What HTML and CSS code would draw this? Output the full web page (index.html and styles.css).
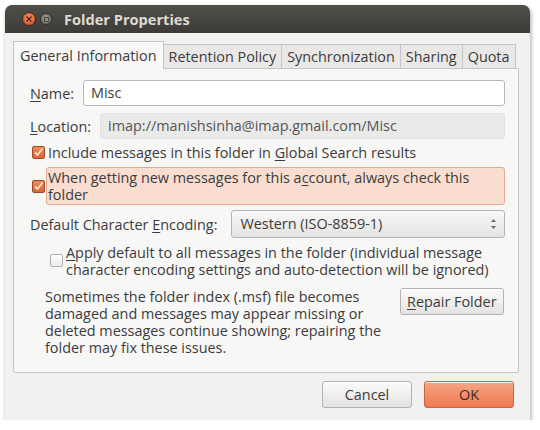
FILE: index.html
```html
<!DOCTYPE html>
<html>
<head>
<meta charset="utf-8">
<link rel="stylesheet" href="styles.css">
</head>
<body>
<div class="window">
  <div class="titlebar">
    <span class="wbtn close"><svg width="8" height="8" viewBox="0 0 8 8"><path d="M1.5 1.5 L6.5 6.5 M6.5 1.5 L1.5 6.5" stroke="#5a2010" stroke-width="1.4"/></svg></span>
    <span class="wbtn mini"><span class="sq"></span></span>
    <span class="title">Folder Properties</span>
  </div>
  <div class="content">
    <div class="tabs">
      <div class="tab active">General Information</div>
      <div class="tab">Retention Policy</div>
      <div class="tab">Synchronization</div>
      <div class="tab">Sharing</div>
      <div class="tab">Quota</div>
    </div>
    <div class="panel">
      <div class="row name-row">
        <span class="label"><u>N</u>ame:</span>
        <div class="input">Misc</div>
      </div>
      <div class="row loc-row">
        <span class="label"><u>L</u>ocation:</span>
        <div class="input ro">imap://manishsinha@imap.gmail.com/Misc</div>
      </div>
      <div class="check-row first">
        <span class="cb on"><svg width="11" height="11" viewBox="0 0 11 11"><path d="M2 5.5 L4.5 8 L9.5 1.5" fill="none" stroke="#fbe3d6" stroke-width="1.8"/></svg></span>
        <span class="ctext">Include messages in this folder in <u>G</u>lobal Search results</span>
      </div>
      <div class="check-row second">
        <span class="cb on"><svg width="11" height="11" viewBox="0 0 11 11"><path d="M2 5.5 L4.5 8 L9.5 1.5" fill="none" stroke="#fbe3d6" stroke-width="1.8"/></svg></span>
        <span class="ctext hl">When getting new messages for this a<u>c</u>count, always check this folder</span>
      </div>
      <div class="row enc-row">
        <span class="label">Default Character <u>E</u>ncoding:</span>
        <div class="select">Western (ISO-8859-1)<span class="arrows"><svg width="7" height="12" viewBox="0 0 7 12"><path d="M3.5 1 L6 4 L1 4 Z M3.5 11 L6 8 L1 8 Z" fill="#6a6a6a"/></svg></span></div>
      </div>
      <div class="check-row apply">
        <span class="cb off"></span>
        <span class="ctext"><u>A</u>pply default to all messages in the folder (individual message character encoding settings and auto-detection will be ignored)</span>
      </div>
      <div class="repair">
        <p>Sometimes the folder index (.msf) file becomes damaged and messages may appear missing or deleted messages continue showing; repairing the folder may fix these issues.</p>
        <div class="btn"><u>R</u>epair Folder</div>
      </div>
    </div>
    <div class="footer">
      <div class="btn big">Cancel</div>
      <div class="btn big ok">OK</div>
    </div>
  </div>
</div>
</body>
</html>
```
FILE: styles.css
```css
* { box-sizing: border-box; }
html, body { margin: 0; padding: 0; background: #ffffff; }
body {
  font-family: "Open Sans", "Noto Sans", sans-serif;
  font-size: 14.4px;
  color: #3c3c3c;
}
u { text-decoration: underline; text-underline-offset: 2px; text-decoration-thickness: 1px; }
.window {
  margin: 5px 0 0 5px;
  width: 525px;
  height: 415px;
  border-radius: 7px 7px 0 0;
  overflow: hidden;
  box-shadow: 1px 2px 4px rgba(0,0,0,0.35);
}
.titlebar {
  height: 28px;
  background: linear-gradient(#504f4a, #3c3b37);
  display: flex;
  align-items: center;
  padding-left: 17px;
}
.wbtn {
  border-radius: 50%;
  display: flex; align-items: center; justify-content: center;
}
.close {
  width: 14px; height: 14px;
  background: radial-gradient(circle at 50% 40%, #f59a72, #e05a2b 70%, #b8441e);
  border: 1px solid #3a2a22;
}
.mini {
  width: 12px; height: 12px;
  margin-left: 4px;
  background: radial-gradient(circle at 50% 40%, #9d9b95, #76746e 70%, #5a5955);
  border: 1px solid #33322e;
}
.mini .sq { width: 5px; height: 5px; border: 1px solid #4a4944; background: #8c8a84; }
.title {
  margin-left: 12px;
  color: #dfdbd2;
  font-weight: bold;
  font-size: 14.6px;
}
.content {
  background: #f2f1f0;
  height: 387px;
  padding: 8px 11px 0 8px;
}
.tabs { display: flex; align-items: flex-end; height: 27px; }
.tab {
  height: 24px;
  padding: 0 5px;
  border: 1px solid #c6c5c3;
  border-bottom: none;
  background: #e9e8e6;
  line-height: 23px;
  margin-right: -1px;
  white-space: nowrap;
}
.tab.active {
  line-height: 27px;
  background: #f7f7f7;
  position: relative;
  z-index: 1;
  margin-bottom: -1px;
  height: 28px;
  padding: 0 6px;
}
.panel {
  height: 305px;
  border: 1px solid #c6c5c3;
  background: #f7f7f6;
  border-radius: 0 2px 2px 2px;
  padding: 11px 13px 0 16px;
}
.row { display: flex; align-items: center; }
.label { white-space: nowrap; }
.input {
  flex: 1;
  height: 26px;
  border: 1px solid #b8b7b5;
  border-radius: 3px;
  background: #ffffff;
  padding-left: 7px;
  line-height: 24px;
}
.name-row .input { margin-left: 9px; }
.loc-row { margin-top: 7px; }
.loc-row .input { margin-left: 9px; background: #eaeae9; border-color: #e2e1e0; color: #555; }
.check-row { display: flex; align-items: center; }
.cb {
  width: 13px; height: 13px; border-radius: 2px; flex: none;
  display: flex; align-items: center; justify-content: center;
}
.cb.on {
  background: linear-gradient(#f0885c, #dc6535);
  border: 1px solid #9a4a28;
}
.cb.off {
  background: linear-gradient(#ffffff, #ecebea);
  border: 1px solid #b0afad;
}
.first { margin-top: 4px; margin-left: 2px; }
.first .ctext { margin-left: 3px; }
.second { margin-top: 5px; margin-left: 2px; }
.second .ctext {
  margin-left: 1px;
  flex: 1;
  background: #f8ddd0;
  border: 1px solid #e2aa8e;
  border-radius: 3px;
  padding: 1px 4px 1px 1px;
  line-height: 17px;
}
.enc-row { margin-top: 5px; }
.select {
  margin-left: 14px;
  flex: 1;
  height: 28px;
  border: 1px solid #b5b4b2;
  border-radius: 3px;
  background: linear-gradient(#f8f8f7, #e4e3e1);
  padding-left: 8px;
  line-height: 26px;
  display: flex;
  justify-content: space-between;
}
.arrows { width: 22px; display: flex; align-items: center; justify-content: center; }
.apply { margin-top: 6px; margin-left: 20px; align-items: flex-start; }
.apply .cb { margin-top: 10px; }
.apply .ctext { margin-left: 3px; line-height: 17px; }
.repair { display: flex; align-items: flex-start; margin-top: 10px; margin-left: 15px; }
.repair p { margin: 0; width: 350px; line-height: 17px; }
.btn {
  border: 1px solid #b3b2b0;
  border-radius: 3px;
  background: linear-gradient(#fbfbfb, #e4e3e1);
  height: 27px;
  line-height: 25px;
  padding: 0 6px;
  white-space: nowrap;
  box-shadow: 0 1px 0 rgba(255,255,255,0.8) inset;
}
.repair .btn { margin-left: 5px; margin-top: 0; }
.footer { display: flex; justify-content: flex-end; margin-top: 8px; padding-right: 5px; }
.btn.big { width: 90px; text-align: center; margin-left: 12px; }
.btn.ok {
  background: linear-gradient(#f6a585, #ef7a52);
  border-color: #c7653f;
  color: #3c2a22;
}
```
